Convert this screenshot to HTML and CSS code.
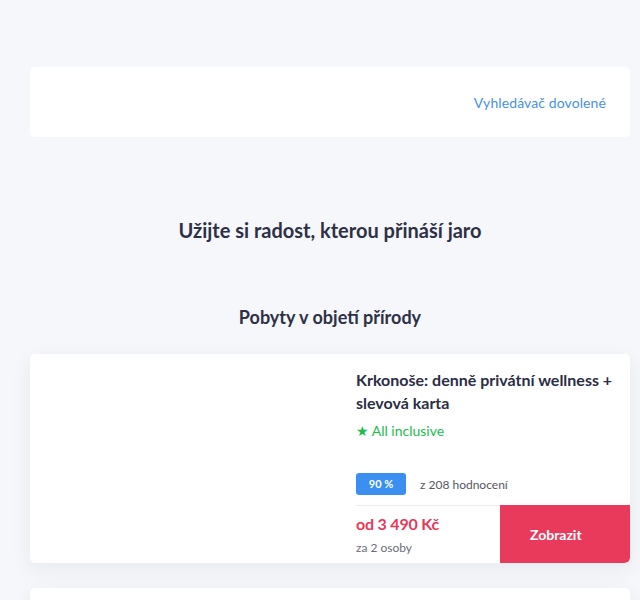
FILE: index.html
```html
<!DOCTYPE html>
<html lang="cs">
<head>
<meta charset="utf-8">
<title>Pobyty</title>
<link rel="stylesheet" href="styles.css">
</head>
<body>
<div class="page">
  <header class="topbar">
    <a class="toplink" href="#">Vyhledávač dovolené</a>
  </header>
  <h1 class="headline">Užijte si radost, kterou přináší jaro</h1>
  <h2 class="section-title">Pobyty v objetí přírody</h2>
  <div class="offers">
    <article class="offer">
      <div class="offer-image"></div>
      <div class="offer-body">
        <div class="offer-info">
          <h3 class="offer-title">Krkonoše: denně privátní wellness + slevová karta</h3>
          <div class="offer-tag"><span class="star">★</span> All inclusive</div>
        </div>
        <div class="offer-rating">
          <span class="badge">90 %</span>
          <span class="reviews">z 208 hodnocení</span>
        </div>
        <div class="offer-bottom">
          <div class="price">
            <div class="price-value">od 3 490 Kč</div>
            <div class="price-note">za 2 osoby</div>
          </div>
          <a class="show-btn" href="#">Zobrazit</a>
        </div>
      </div>
    </article>
    <article class="offer"></article>
  </div>
</div>
</body>
</html>
```

FILE: styles.css
```css
html, body {
  margin: 0;
  padding: 0;
}
body {
  background: #f5f7fa;
  font-family: Lato, "Open Sans", sans-serif;
  color: #2e3047;
}
.page {
  padding: 67px 10px 0 30px;
}
.topbar {
  background: #fff;
  border-radius: 5px;
  height: 70px;
  display: flex;
  align-items: center;
  justify-content: flex-end;
  padding: 0 24px;
}
.toplink {
  color: #4a90e2;
  text-decoration: none;
  font-size: 14px;
  letter-spacing: 0.1px;
}
.headline {
  margin: 79px 0 0;
  text-align: center;
  font-size: 20px;
  line-height: 28px;
  font-weight: 700;
  color: #2e3047;
}
.section-title {
  margin: 61px 0 0;
  text-align: center;
  font-size: 18px;
  line-height: 24px;
  font-weight: 700;
  color: #2e3047;
}
.offers {
  margin-top: 25px;
  display: flex;
  flex-direction: column;
  gap: 25px;
}
.offer {
  background: #fff;
  border-radius: 5px;
  box-shadow: 0 6px 20px rgba(40, 50, 90, 0.07);
  display: flex;
  height: 209px;
  overflow: hidden;
}
.offer-image {
  flex: 0 0 310px;
}
.offer-body {
  flex: 1;
  display: flex;
  flex-direction: column;
}
.offer-info {
  padding: 14px 16px 0;
  flex: 1;
}
.offer-title {
  margin: 0;
  font-size: 16px;
  line-height: 23px;
  font-weight: 700;
  color: #2b2d45;
}
.offer-tag {
  margin-top: 7px;
  font-size: 14px;
  line-height: 20px;
  color: #22bb4e;
}
.star {
  font-family: "DejaVu Sans", sans-serif;
  font-size: 14px;
}
.offer-rating {
  padding: 0 16px;
  display: flex;
  align-items: center;
  gap: 14px;
  margin-bottom: 10px;
}
.badge {
  background: #3b8ff0;
  color: #fff;
  font-size: 11px;
  font-weight: 700;
  width: 50px;
  height: 22px;
  line-height: 22px;
  text-align: center;
  border-radius: 3px;
}
.reviews {
  font-size: 12px;
  color: #555761;
}
.offer-bottom {
  display: flex;
  height: 58px;
}
.price {
  flex: 1;
  margin-left: 16px;
  border-top: 1px solid #ececf0;
  padding-top: 7px;
}
.price-value {
  color: #e63a5b;
  font-weight: 700;
  font-size: 16px;
  line-height: 22px;
  letter-spacing: -0.2px;
}
.price-note {
  margin-top: 5px;
  font-size: 12px;
  line-height: 16px;
  color: #6c6e78;
}
.show-btn {
  flex: 0 0 130px;
  box-sizing: border-box;
  padding-left: 30px;
  background: #ea3a5b;
  color: #fff;
  text-decoration: none;
  font-weight: 700;
  font-size: 14px;
  display: flex;
  align-items: center;
  border-bottom-right-radius: 5px;
}
```
